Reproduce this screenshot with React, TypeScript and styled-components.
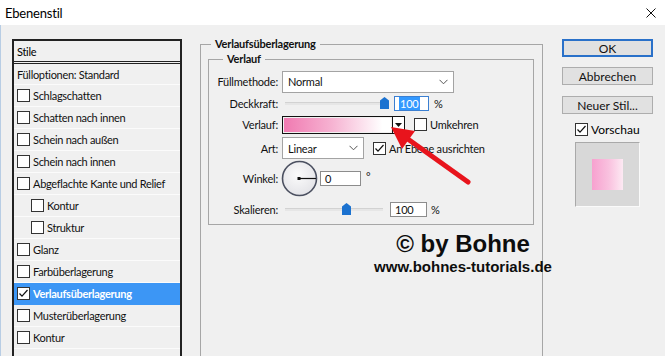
import React from 'react';
import styled, { createGlobalStyle } from 'styled-components';

const GlobalStyle = createGlobalStyle`
  html, body {
    margin: 0;
    padding: 0;
    background: #f0f0f0;
  }
  body {
    width: 665px;
    height: 356px;
    overflow: hidden;
    font-family: Lato, "Noto Sans", sans-serif;
    color: #000;
  }
`;

const Window = styled.div`
  position: relative;
  width: 665px;
  height: 356px;
  background: #f0f0f0;
  overflow: hidden;
`;

const TitleBar = styled.div`
  height: 25px;
  background: #fff;
  display: flex;
  align-items: center;
  justify-content: space-between;
  padding: 0 9px 0 5px;
  font-size: 13px;
  letter-spacing: -0.2px;
`;

const Body = styled.div`
  display: flex;
  align-items: flex-start;
  height: 331px;
  box-sizing: border-box;
  border-left: 1px solid #b8cde4;
  padding: 14px 12px 0 11px;
`;

const StyleList = styled.div`
  width: 170px;
  height: 330px;
  flex-shrink: 0;
  box-sizing: border-box;
  border: 2px solid #222;
  border-bottom: none;
  overflow: hidden;
  font-size: 11px;
  letter-spacing: -0.3px;
`;

const ListHeader = styled.div`
  height: 20px;
  display: flex;
  align-items: center;
  padding-left: 3px;
  border-bottom: 3px double #222;
`;

const ListRow = styled.div<{ $indent?: boolean; $selected?: boolean; $h?: number }>`
  height: ${(p) => p.$h ?? 22}px;
  box-sizing: border-box;
  display: flex;
  align-items: center;
  gap: 3px;
  padding-left: ${(p) => (p.$indent ? 17 : 3)}px;
  border-bottom: 1px solid ${(p) => (p.$selected ? '#3c96f5' : '#fbfbfb')};
  background: ${(p) => (p.$selected ? '#3c96f5' : 'transparent')};
  color: ${(p) => (p.$selected ? '#fff' : '#111')};
  font-weight: ${(p) => (p.$selected ? 700 : 400)};
`;

const Box = styled.span`
  width: 13px;
  height: 13px;
  flex-shrink: 0;
  box-sizing: border-box;
  border: 1px solid #333;
  background: #fff;
  display: inline-flex;
  align-items: center;
  justify-content: center;
`;

const Checkbox = ({ checked }: { checked?: boolean }) => (
  <Box>
    {checked && (
      <svg width="11" height="11" viewBox="0 0 11 11">
        <polyline points="1.5,5.5 4,8.2 9.5,2" fill="none" stroke="#111" strokeWidth="1.2" />
      </svg>
    )}
  </Box>
);

const Main = styled.div`
  margin-left: 18px;
  margin-top: -2px;
`;

const OuterGroup = styled.fieldset`
  width: 343px;
  height: 330px;
  box-sizing: border-box;
  margin: 0;
  padding: 0;
  border: 1px solid #a6a6a6;
`;

const GroupTitle = styled.legend<{ $offset: number }>`
  margin-left: ${(p) => p.$offset}px;
  padding: 0 4px;
  font-size: 11px;
  line-height: 14px;
  font-weight: 700;
  letter-spacing: -0.2px;
  color: #111;
`;

const InnerGroup = styled.fieldset`
  width: 326px;
  box-sizing: border-box;
  margin: 1px 0 0 7px;
  padding: 4px 0 2px 0;
  border: 1px solid #a6a6a6;
`;

const FieldRow = styled.div<{ $h: number }>`
  height: ${(p) => p.$h}px;
  display: grid;
  grid-template-columns: 69px 1fr;
  column-gap: 4px;
  align-items: center;
  font-size: 11px;
  letter-spacing: -0.2px;
  color: #111;
`;

const Label = styled.span`
  text-align: right;
`;

const Controls = styled.div`
  display: flex;
  align-items: center;
`;

const Select = styled.div<{ $w: number }>`
  width: ${(p) => p.$w}px;
  height: 22px;
  box-sizing: border-box;
  border: 1px solid #a3a3a3;
  background: #fff;
  display: flex;
  align-items: center;
  justify-content: space-between;
  padding: 0 5px 0 5px;
`;

const Chevron = () => (
  <svg width="9" height="6" viewBox="0 0 9 6">
    <polyline points="0.5,0.8 4.5,4.8 8.5,0.8" fill="none" stroke="#555" strokeWidth="1" />
  </svg>
);

const Input = styled.div<{ $w: number; $focus?: boolean; $ml: number }>`
  width: ${(p) => p.$w}px;
  height: 15px;
  margin-left: ${(p) => p.$ml}px;
  box-sizing: border-box;
  border: 1px solid ${(p) => (p.$focus ? '#3b7fd1' : '#8c8c8c')};
  background: #fff;
  display: flex;
  align-items: center;
  padding-left: 4px;
  font-size: 11px;
`;

const Selected = styled.span`
  background: #3399ff;
  color: #fff;
  padding: 0 1px;
`;

const Unit = styled.span<{ $ml: number; $up?: boolean }>`
  margin-left: ${(p) => p.$ml}px;
  position: relative;
  top: ${(p) => (p.$up ? -2 : 0)}px;
`;

const SliderWrap = styled.div<{ $w: number }>`
  position: relative;
  width: ${(p) => p.$w}px;
  height: 12px;
  margin-left: 3px;
  display: flex;
  align-items: center;
`;

const Track = styled.div`
  width: 100%;
  height: 3px;
  box-sizing: border-box;
  background: #e6e6e6;
  border-top: 1px solid #d2d2d2;
`;

const Thumb = styled.svg`
  position: absolute;
  top: 0;
  margin-left: -4px;
`;

const Slider = ({ w, pos }: { w: number; pos: number }) => (
  <SliderWrap $w={w}>
    <Track />
    <Thumb width="9" height="12" viewBox="0 0 9 12" style={{ left: pos }}>
      <polygon points="0,3.5 4.5,0 9,3.5 9,12 0,12" fill="#1b72d0" />
    </Thumb>
  </SliderWrap>
);

const GradientField = styled.div`
  width: 123px;
  height: 18px;
  box-sizing: border-box;
  border: 1px solid #111;
  display: flex;
`;

const GradientFill = styled.div`
  flex: 1;
  margin: 1px;
  background: linear-gradient(to right, #f07ab1, #f6b3d2 45%, #fff 92%);
`;

const DropButton = styled.div`
  width: 11px;
  border-left: 1px solid #111;
  background: #fff;
  display: flex;
  align-items: center;
  justify-content: center;
`;

const InlineCheck = styled.label<{ $ml: number }>`
  margin-left: ${(p) => p.$ml}px;
  display: flex;
  align-items: center;
  gap: 3px;
`;

const Dial = () => (
  <svg width="37" height="37" viewBox="0 0 37 37" style={{ marginLeft: -1 }}>
    <defs>
      <radialGradient id="dialFill" cx="0.45" cy="0.4" r="0.6">
        <stop offset="0" stopColor="#fbfbfb" />
        <stop offset="1" stopColor="#e4e4e8" />
      </radialGradient>
    </defs>
    <circle cx="18.5" cy="18.5" r="17" fill="url(#dialFill)" stroke="#4b5060" strokeWidth="1.6" />
    <line x1="18.5" y1="18.5" x2="35" y2="18.5" stroke="#111" strokeWidth="1.2" />
    <rect x="16.5" y="17" width="3" height="3" fill="#111" />
  </svg>
);

const Side = styled.div`
  margin-left: 19px;
  width: 91px;
  display: flex;
  flex-direction: column;
  font-size: 12px;
`;

const Button = styled.div<{ $primary?: boolean; $mt: number }>`
  height: 18px;
  margin-top: ${(p) => p.$mt}px;
  box-sizing: border-box;
  border: ${(p) => (p.$primary ? '2px solid #2a71c9' : '1px solid #adadad')};
  background: #e1e1e1;
  display: flex;
  align-items: center;
  justify-content: center;
  color: #111;
`;

const PreviewCheck = styled.div`
  margin: 8px 0 0 13px;
  display: flex;
  align-items: center;
  gap: 3px;
  height: 15px;
`;

const PreviewBox = styled.div`
  margin: 5px 0 0 13px;
  width: 65px;
  height: 65px;
  box-sizing: border-box;
  background: #d8d8d8;
  border: 1px solid #a9a9a9;
  border-right-color: #fafafa;
  border-bottom-color: #fafafa;
  display: flex;
  align-items: center;
  justify-content: center;
`;

const PreviewSwatch = styled.div`
  width: 31px;
  height: 31px;
  background: linear-gradient(to right, #f7a1cf, #f9c2df 55%, #fde9f3);
`;

const Watermark = styled.div`
  position: absolute;
  left: 363px;
  top: 230px;
  width: 200px;
  text-align: center;
  font-family: "Liberation Sans", Arial, sans-serif;
  font-weight: 700;
  color: #0d0d0d;
`;

const MarkTitle = styled.div`
  font-size: 24px;
  line-height: 28px;
`;

const MarkUrl = styled.div`
  font-size: 15px;
  line-height: 18px;
`;

const Arrow = styled.svg`
  position: absolute;
  left: 0;
  top: 0;
  pointer-events: none;
`;

const styles = [
  { name: 'Schlagschatten' },
  { name: 'Schatten nach innen' },
  { name: 'Schein nach außen' },
  { name: 'Schein nach innen' },
  { name: 'Abgeflachte Kante und Relief' },
  { name: 'Kontur', indent: true },
  { name: 'Struktur', indent: true },
  { name: 'Glanz' },
  { name: 'Farbüberlagerung' },
  { name: 'Verlaufsüberlagerung', checked: true },
  { name: 'Musterüberlagerung' },
  { name: 'Kontur' },
  { name: '' },
];

export default function App() {
  return (
    <Window>
      <GlobalStyle />
      <TitleBar>
        <span>Ebenenstil</span>
        <svg width="10" height="10" viewBox="0 0 10 10">
          <path d="M0.5 0.5 L9.5 9.5 M9.5 0.5 L0.5 9.5" stroke="#111" strokeWidth="1" />
        </svg>
      </TitleBar>

      <Body>
        <StyleList>
          <ListHeader>Stile</ListHeader>
          <ListRow $h={21}>Fülloptionen: Standard</ListRow>
          {styles.map((s, i) => (
            <ListRow key={i} $indent={s.indent} $selected={s.checked}>
              {s.name && <Checkbox checked={s.checked} />}
              {s.name}
            </ListRow>
          ))}
        </StyleList>

        <Main>
          <OuterGroup>
            <GroupTitle $offset={10}>Verlaufsüberlagerung</GroupTitle>
            <InnerGroup>
              <GroupTitle $offset={14}>Verlauf</GroupTitle>
              <FieldRow $h={23}>
                <Label>Füllmethode:</Label>
                <Controls>
                  <Select $w={172}>
                    <span>Normal</span>
                    <Chevron />
                  </Select>
                </Controls>
              </FieldRow>
              <FieldRow $h={20}>
                <Label>Deckkraft:</Label>
                <Controls>
                  <Slider w={102} pos={99} />
                  <Input $w={35} $ml={7} $focus>
                    <Selected>100</Selected>
                  </Input>
                  <Unit $ml={5}>%</Unit>
                </Controls>
              </FieldRow>
              <FieldRow $h={23}>
                <Label>Verlauf:</Label>
                <Controls>
                  <GradientField>
                    <GradientFill />
                    <DropButton>
                      <svg width="7" height="4" viewBox="0 0 7 4">
                        <polygon points="0,0 7,0 3.5,4" fill="#111" />
                      </svg>
                    </DropButton>
                  </GradientField>
                  <InlineCheck $ml={9}>
                    <Checkbox />
                    Umkehren
                  </InlineCheck>
                </Controls>
              </FieldRow>
              <FieldRow $h={24}>
                <Label>Art:</Label>
                <Controls>
                  <Select $w={82}>
                    <span>Linear</span>
                    <Chevron />
                  </Select>
                  <InlineCheck $ml={9}>
                    <Checkbox checked />
                    An Ebene ausrichten
                  </InlineCheck>
                </Controls>
              </FieldRow>
              <FieldRow $h={36}>
                <Label>Winkel:</Label>
                <Controls>
                  <Dial />
                  <Input $w={41} $ml={2}>0</Input>
                  <Unit $ml={5} $up>°</Unit>
                </Controls>
              </FieldRow>
              <FieldRow $h={26}>
                <Label>Skalieren:</Label>
                <Controls>
                  <Slider w={98} pos={61} />
                  <Input $w={37} $ml={7}>100</Input>
                  <Unit $ml={4}>%</Unit>
                </Controls>
              </FieldRow>
            </InnerGroup>
          </OuterGroup>
        </Main>

        <Side>
          <Button $primary $mt={0}>OK</Button>
          <Button $mt={10}>Abbrechen</Button>
          <Button $mt={11}>Neuer Stil...</Button>
          <PreviewCheck>
            <Checkbox checked />
            Vorschau
          </PreviewCheck>
          <PreviewBox>
            <PreviewSwatch />
          </PreviewBox>
        </Side>
      </Body>

      <Watermark>
        <MarkTitle>© by Bohne</MarkTitle>
        <MarkUrl>www.bohnes-tutorials.de</MarkUrl>
      </Watermark>

      <Arrow width="665" height="356" viewBox="0 0 665 356">
        <line x1="468" y1="182" x2="405" y2="137" stroke="#e8141c" strokeWidth="5" strokeLinecap="round" />
        <polygon points="391,127 415,131 402,149" fill="#e8141c" />
      </Arrow>
    </Window>
  );
}
